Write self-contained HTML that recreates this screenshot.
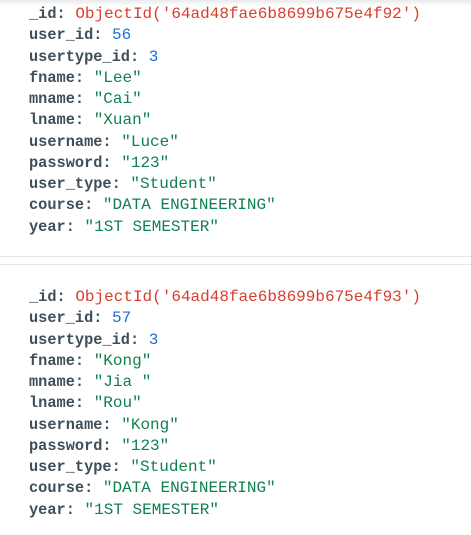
<!DOCTYPE html>
<html><head><style>
html,body{margin:0;padding:0;background:#fff;width:471px;height:535px;overflow:hidden}
.top{position:absolute;left:0;top:0;width:471px;height:6px;background:linear-gradient(#e8eaeb,#fff)}
.blk{position:absolute;left:29px;font-family:"Liberation Mono",monospace;font-size:16px;line-height:21.25px;white-space:nowrap}
.k{color:#3d4f58;font-weight:bold;font-size:15.3px}
.r{color:#d83e2b}.b{color:#1a6fd6}.g{color:#11804f}
.l1{position:absolute;left:0;width:471px;height:1px;background:#e3e5e6}
</style></head><body>
<div class="top"></div>
<div class="blk" style="top:4px"><div><span class="k">_id:</span> <span class="r">ObjectId('64ad48fae6b8699b675e4f92')</span></div><div><span class="k">user_id:</span> <span class="b">56</span></div><div><span class="k">usertype_id:</span> <span class="b">3</span></div><div><span class="k">fname:</span> <span class="g">"Lee"</span></div><div><span class="k">mname:</span> <span class="g">"Cai"</span></div><div><span class="k">lname:</span> <span class="g">"Xuan"</span></div><div><span class="k">username:</span> <span class="g">"Luce"</span></div><div><span class="k">password:</span> <span class="g">"123"</span></div><div><span class="k">user_type:</span> <span class="g">"Student"</span></div><div><span class="k">course:</span> <span class="g">"DATA ENGINEERING"</span></div><div><span class="k">year:</span> <span class="g">"1ST SEMESTER"</span></div></div>
<div class="l1" style="top:256px"></div>
<div class="l1" style="top:264px"></div>
<div class="blk" style="top:287px"><div><span class="k">_id:</span> <span class="r">ObjectId('64ad48fae6b8699b675e4f93')</span></div><div><span class="k">user_id:</span> <span class="b">57</span></div><div><span class="k">usertype_id:</span> <span class="b">3</span></div><div><span class="k">fname:</span> <span class="g">"Kong"</span></div><div><span class="k">mname:</span> <span class="g">"Jia "</span></div><div><span class="k">lname:</span> <span class="g">"Rou"</span></div><div><span class="k">username:</span> <span class="g">"Kong"</span></div><div><span class="k">password:</span> <span class="g">"123"</span></div><div><span class="k">user_type:</span> <span class="g">"Student"</span></div><div><span class="k">course:</span> <span class="g">"DATA ENGINEERING"</span></div><div><span class="k">year:</span> <span class="g">"1ST SEMESTER"</span></div></div>
</body></html>
